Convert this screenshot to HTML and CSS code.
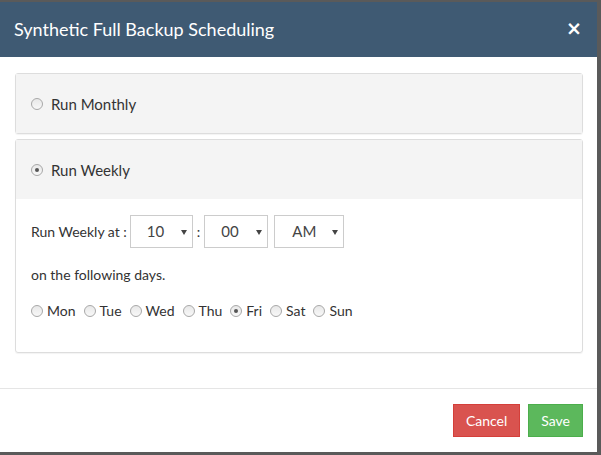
FILE: index.html
```html
<!DOCTYPE html>
<html lang="en">
<head>
  <meta charset="UTF-8" />
  <title>Synthetic Full Backup Scheduling</title>
  <link rel="stylesheet" href="styles.css">
</head>
<body>
  <div class="modal">
    <div class="modal-header">
      <h4 class="modal-title">Synthetic Full Backup Scheduling</h4>
      <span class="close">&times;</span>
    </div>

    <div class="modal-body">
      <div class="panel">
        <div class="panel-heading">
          <label class="radio-label"><span class="radio"></span> Run Monthly</label>
        </div>
      </div>

      <div class="panel">
        <div class="panel-heading">
          <label class="radio-label"><span class="radio checked"></span> Run Weekly</label>
        </div>
        <div class="panel-body">
          <div class="time-row">
            <span>Run Weekly at :</span>
            <span class="select w-hour">10</span>
            <span class="colon">:</span>
            <span class="select w-min">00</span>
            <span class="select w-ampm">AM</span>
          </div>
          <p class="days-label">on the following days.</p>
          <div class="days">
            <label class="day"><span class="radio small"></span>Mon</label>
            <label class="day"><span class="radio small"></span>Tue</label>
            <label class="day"><span class="radio small"></span>Wed</label>
            <label class="day"><span class="radio small"></span>Thu</label>
            <label class="day"><span class="radio small checked"></span>Fri</label>
            <label class="day"><span class="radio small"></span>Sat</label>
            <label class="day"><span class="radio small"></span>Sun</label>
          </div>
        </div>
      </div>
    </div>

    <div class="modal-footer">
      <button class="btn btn-danger">Cancel</button>
      <button class="btn btn-success">Save</button>
    </div>
  </div>
</body>
</html>
```

FILE: styles.css
```css
body {
  margin: 0;
  padding-top: 2px;
  background: #5a5a5a;
  font-family: Lato, "Open Sans", sans-serif;
  color: #333;
  height: 455px;
  overflow: hidden;
}

.modal {
  width: 597px;
  height: 450px;
  background: #fff;
  display: flex;
  flex-direction: column;
}

.modal-header {
  height: 55px;
  background: #3f5a73;
  color: #fff;
  display: flex;
  align-items: center;
  justify-content: space-between;
  padding: 0 14px;
  box-sizing: border-box;
}

.modal-title {
  margin: 0;
  font-size: 18px;
  font-weight: normal;
  padding-bottom: 1px;
}

.close {
  font-family: "DejaVu Sans", sans-serif;
  font-size: 19px;
  font-weight: bold;
  line-height: 1;
  margin-right: 1px;
  margin-bottom: 2px;
}

.modal-body {
  flex: 1;
  padding: 16px 14px 0 15px;
}

.panel {
  border: 1px solid #ddd;
  border-radius: 3px;
  margin-bottom: 5px;
  box-shadow: 0 1px 1px rgba(0, 0, 0, 0.05);
}

.panel-heading {
  background: #f4f4f4;
  height: 59px;
  display: flex;
  align-items: center;
  padding-left: 15px;
}

.radio-label {
  display: flex;
  align-items: center;
  font-size: 15px;
  color: #333;
}

.radio {
  display: inline-block;
  width: 10px;
  height: 10px;
  border-radius: 50%;
  border: 1px solid #a8a8a8;
  background: linear-gradient(#e8e8e8, #f8f8f8);
  margin-right: 8px;
  position: relative;
}

.radio.checked::after {
  content: "";
  position: absolute;
  left: 3px;
  top: 3px;
  width: 4px;
  height: 4px;
  border-radius: 50%;
  background: #555;
}

.panel-body {
  padding: 16px 15px 33px 15px;
}

.time-row {
  display: flex;
  align-items: center;
  font-size: 14px;
}

.select {
  display: inline-block;
  height: 33px;
  box-sizing: border-box;
  border: 1px solid #ccc;
  font-size: 15px;
  line-height: 31px;
  color: #444;
  padding-left: 16px;
  position: relative;
}

.select::after {
  content: "";
  position: absolute;
  right: 5px;
  top: 14px;
  border-left: 3px solid transparent;
  border-right: 3px solid transparent;
  border-top: 5px solid #444;
}

.w-hour {
  width: 63px;
  margin-left: 3px;
}

.w-min {
  width: 64px;
}

.w-ampm {
  width: 70px;
  margin-left: 6px;
  padding-left: 17px;
}

.colon {
  margin: 0 4px;
}

.days-label {
  margin: 18px 0 0;
  font-size: 14px;
}

.days {
  display: flex;
  margin-top: 19px;
  font-size: 14px;
}

.day {
  display: flex;
  align-items: center;
  margin-right: 8px;
}

.radio.small {
  margin-right: 4px;
}

.modal-footer {
  border-top: 1px solid #e5e5e5;
  height: 64px;
  display: flex;
  justify-content: flex-end;
  align-items: flex-start;
  padding: 15px 14px 0 0;
  box-sizing: border-box;
  gap: 8px;
}

.btn {
  font-family: Lato, "Open Sans", sans-serif;
  font-size: 14px;
  height: 33px;
  padding: 0 12px;
  border: 1px solid;
  color: #fff;
  border-radius: 0;
}

.btn-danger {
  background: #d9534f;
  border-color: #d43f3a;
}

.btn-success {
  background: #5cb85c;
  border-color: #4cae4c;
}
```
